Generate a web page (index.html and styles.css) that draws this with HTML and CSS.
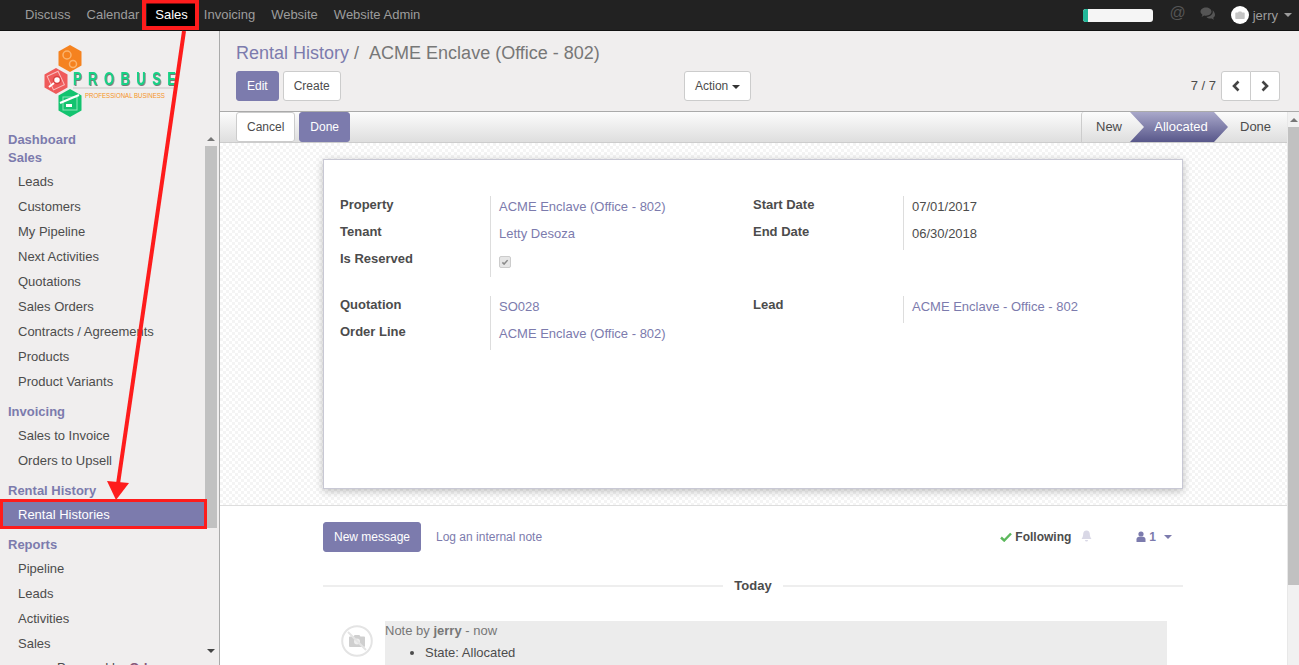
FILE: index.html

```html
<!DOCTYPE html>
<html lang="en">
<head>
<meta charset="UTF-8" />
<meta name="viewport" content="width=device-width, initial-scale=1" />
<title>Rental History</title>
<link rel="stylesheet" href="styles.css">
</head>
<body>

<nav class="topbar">
  <ul class="apps">
    <li>Discuss</li>
    <li>Calendar</li>
    <li class="current">Sales</li>
    <li>Invoicing</li>
    <li>Website</li>
    <li>Website Admin</li>
  </ul>
  <div class="systray">
    <div class="progress"><span></span></div>
    <span class="at">@</span>
    <svg class="comments" width="16" height="14" viewBox="0 0 16 14"><path d="M6 0.5C2.9 0.5 0.5 2.3 0.5 4.6c0 1.3 0.8 2.4 2 3.2L1.6 10l2.6-1.4c0.6 0.1 1.2 0.2 1.8 0.2 3.1 0 5.5-1.9 5.500-4.200S9.100 0.500 6 0.5z" fill="#555"/><path d="M12.400 3.200c0.300 0.500 0.400 1 0.400 1.500 0 2.800-2.900 5.100-6.300 5.200 0.900 1 2.300 1.600 3.900 1.600 0.400 0 0.800 0 1.200-0.100l2.300 1.300-0.700-2c1.100-0.700 1.800-1.800 1.800-3 0-1.900-1.100-3.500-2.600-4.500z" fill="#555"/></svg>
    <span class="avatar">
      <svg width="10" height="8" viewBox="0 0 10 8"><path d="M1 1.500h2l0.700-1h2.600l0.700 1h2a0.700 0.700 0 0 1 0.700 0.700V7.300a0.700 0.700 0 0 1-0.700 0.700H1a0.700 0.700 0 0 1-0.700-0.700V2.200A0.700 0.700 0 0 1 1 1.500z" fill="#c4c4c4"/></svg>
    </span>
    <span class="user">jerry</span>
    <span class="caret"></span>
  </div>
</nav>

<div class="app">
  <aside class="sidebar">
    <div class="logo">
      <svg width="150" height="80" viewBox="0 0 150 80">
        <polygon points="30,1 41.500,7.500 41.500,21.500 30,28 18.500,21.500 18.500,7.500" fill="#f5821f"/>
        <circle cx="27" cy="11" r="4" fill="none" stroke="#fbb46e" stroke-width="1.500"/>
        <circle cx="33" cy="20" r="3.500" fill="none" stroke="#fbb46e" stroke-width="1.500"/>
        <polygon points="16,24 27.500,30.500 27.500,43.500 16,50 4.500,43.500 4.500,30.500" fill="#ef5b5b"/>
        <rect x="10" y="29" width="12" height="15" fill="none" stroke="#f9bcbc" transform="rotate(-25 16 37)"/>
        <circle cx="17" cy="36" r="3.500" fill="#fff" stroke="#d93f3f" stroke-width="1.500"/>
        <line x1="14" y1="39" x2="9" y2="43" stroke="#fff" stroke-width="2"/>
        <polygon points="30,45 41.500,51.500 41.500,66.500 30,73 18.500,66.500 18.500,51.500" fill="#13c36f"/>
        <rect x="23" y="53" width="14" height="13" fill="none" stroke="#8ce6ba"/>
        <line x1="20" y1="59" x2="39" y2="51" stroke="#fff" stroke-width="2"/>
        <rect x="26" y="60" width="6" height="3" fill="#fff"/>
        <line x1="33" y1="44" x2="137" y2="44" stroke="#c9c6c6" stroke-width="1"/>
        <text class="logo-name" transform="translate(33 41) scale(0.72 1)">PROBUSE</text>
        <text class="logo-tag" transform="translate(45 54) scale(0.85 1)">PROFESSIONAL BUSINESS</text>
      </svg>
    </div>
    <div class="menu-wrap">
      <div class="menu">
        <h4 class="first">Dashboard</h4>
        <h4>Sales</h4>
        <ul>
          <li>Leads</li>
          <li>Customers</li>
          <li>My Pipeline</li>
          <li>Next Activities</li>
          <li>Quotations</li>
          <li>Sales Orders</li>
          <li>Contracts / Agreements</li>
          <li>Products</li>
          <li>Product Variants</li>
        </ul>
        <h4 class="section">Invoicing</h4>
        <ul>
          <li>Sales to Invoice</li>
          <li>Orders to Upsell</li>
        </ul>
        <h4 class="section">Rental History</h4>
        <ul>
          <li class="active">Rental Histories</li>
        </ul>
        <h4 class="section">Reports</h4>
        <ul>
          <li>Pipeline</li>
          <li>Leads</li>
          <li>Activities</li>
          <li>Sales</li>
        </ul>
        <div class="powered">Powered by <b>Odoo</b></div>
      </div>
      <div class="scrollbar side-scroll">
        <span class="arrow-up"></span>
        <span class="thumb"></span>
        <span class="arrow-down"></span>
      </div>
    </div>
  </aside>

  <main class="content">
    <header class="control-panel">
      <h1 class="breadcrumb"><a>Rental History</a> <span class="slash">/</span> <span>ACME Enclave (Office - 802)</span></h1>
      <div class="cp-row">
        <div class="btn-set">
          <button class="btn primary">Edit</button>
          <button class="btn">Create</button>
        </div>
        <button class="btn action">Action <span class="caret dark"></span></button>
        <div class="pager">
          <span class="pager-count">7 / 7</span>
          <div class="pager-btns">
            <button class="btn"><svg width="10" height="12" viewBox="0 0 10 12"><path d="M7.500 1.500L3 6l4.500 4.500" fill="none" stroke="#444" stroke-width="2.600"/></svg></button>
            <button class="btn"><svg width="10" height="12" viewBox="0 0 10 12"><path d="M2.500 1.500L7 6l-4.500 4.500" fill="none" stroke="#444" stroke-width="2.600"/></svg></button>
          </div>
        </div>
      </div>
    </header>

    <div class="lower">
      <div class="view">
        <div class="statusbar">
          <div class="btn-set">
            <button class="btn">Cancel</button>
            <button class="btn primary">Done</button>
          </div>
          <div class="stages">
            <span class="stage new">New</span>
            <span class="stage current">Allocated</span>
            <span class="stage done">Done</span>
          </div>
        </div>

        <div class="sheet-bg">
          <section class="sheet">
            <div class="form-cols">
              <div>
                <div class="group">
                  <div class="row"><label>Property</label><a>ACME Enclave (Office - 802)</a></div>
                  <div class="row"><label>Tenant</label><a>Letty Desoza</a></div>
                  <div class="row"><label>Is Reserved</label>
                    <span class="check"><svg width="9" height="8" viewBox="0 0 9 8"><path d="M1 4.500l2.300 2.300L8 1.500" fill="none" stroke="#8a8a8a" stroke-width="2"/></svg></span>
                  </div>
                </div>
                <div class="group">
                  <div class="row"><label>Quotation</label><a>SO028</a></div>
                  <div class="row"><label>Order Line</label><a>ACME Enclave (Office - 802)</a></div>
                </div>
              </div>
              <div>
                <div class="group">
                  <div class="row"><label>Start Date</label><span>07/01/2017</span></div>
                  <div class="row"><label>End Date</label><span>06/30/2018</span></div>
                </div>
                <div class="group push">
                  <div class="row"><label>Lead</label><a>ACME Enclave - Office - 802</a></div>
                </div>
              </div>
            </div>
          </section>
        </div>

        <section class="chatter">
          <div class="chatter-top">
            <button class="btn primary">New message</button>
            <a class="log-note">Log an internal note</a>
            <div class="followers">
              <svg width="12" height="10" viewBox="0 0 12 10"><path d="M1 5.500l3.200 3L11 1.500" fill="none" stroke="#5cb85c" stroke-width="2.400"/></svg>
              <b>Following</b>
              <svg class="bell" width="11" height="12" viewBox="0 0 11 12"><path d="M5.500 0.500c-2.200 0-3.300 1.600-3.300 3.500 0 2.500-1 4-1.700 5h10c-0.700-1-1.700-2.500-1.700-5 0-1.900-1.100-3.500-3.300-3.500zM4 10h3a1.500 1.500 0 0 1-3 0z" fill="#d9d8e6"/></svg>
              <span class="count">
                <svg width="10" height="12" viewBox="0 0 10 12"><circle cx="5" cy="3" r="2.600" fill="#7c7bad"/><path d="M0.500 11v-2.500c0-1.600 1.200-2.700 2.500-2.700h4c1.300 0 2.500 1.100 2.500 2.700V11z" fill="#7c7bad"/></svg>
                <b>1</b>
                <span class="caret purple"></span>
              </span>
            </div>
          </div>
          <div class="divider"><span>Today</span></div>
          <div class="message">
            <span class="msg-avatar">
              <svg width="32" height="32" viewBox="0 0 32 32"><circle cx="16" cy="16" r="14.800" fill="none" stroke="#e4e4e4" stroke-width="2"/><path d="M9 11.500h3.500l1.200-1.500h4.600l1.200 1.500H23a1 1 0 0 1 1 1v8.500a1 1 0 0 1-1 1H9a1 1 0 0 1-1-1v-8.500a1 1 0 0 1 1-1z" fill="#cfcfcf"/><circle cx="16" cy="16.500" r="3" fill="#eee"/><line x1="7" y1="7" x2="25" y2="25" stroke="#e4e4e4" stroke-width="2"/></svg>
            </span>
            <div class="note">
              <div class="note-head">Note by <b>jerry</b> - now</div>
              <ul><li>State: Allocated</li></ul>
            </div>
          </div>
        </section>
      </div>
      <div class="scrollbar main-scroll">
        <span class="arrow-up"></span>
        <span class="thumb"></span>
      </div>
    </div>
  </main>
</div>

<!-- red annotation drawn over the screenshot -->
<svg class="annotation" width="1299" height="665" viewBox="0 0 1299 665">
  <rect x="144" y="1.500" width="53" height="26.500" fill="none" stroke="#fe1c1c" stroke-width="4"/>
  <rect x="1.500" y="500.500" width="204" height="27" fill="none" stroke="#fe1c1c" stroke-width="3"/>
  <line x1="184" y1="31" x2="118" y2="484" stroke="#fe1c1c" stroke-width="4"/>
  <polygon points="107,481 129,483 116,500" fill="#fe1c1c"/>
</svg>

</body>
</html>
```

FILE: styles.css

```css
* {
  box-sizing: border-box;
}
html, body {
  height: 100%;
}
body {
  margin: 0;
  overflow: hidden;
  position: relative;
  font-family: "Liberation Sans", Arial, sans-serif;
  font-size: 13px;
  color: #4c4c4c;
  background: #fff;
}
ul {
  list-style: none;
  margin: 0;
  padding: 0;
}
a {
  color: #7c7bad;
}

/* top bar */
.topbar {
  height: 31px;
  background: #222;
  border-bottom: 1px solid #111;
  display: flex;
  justify-content: space-between;
  color: #9d9d9d;
}
.apps {
  display: flex;
  padding-left: 17px;
}
.apps li {
  padding: 0 8px;
  line-height: 30px;
}
.apps .current {
  background: #000;
  color: #fff;
}
.systray {
  display: flex;
  align-items: center;
  padding-right: 7px;
}
.progress {
  width: 70px;
  height: 13px;
  background: #f5f5f5;
  border-radius: 3px;
  overflow: hidden;
  margin-right: 16px;
}
.progress span {
  display: block;
  width: 5px;
  height: 100%;
  background: #21b799;
}
.at {
  font-size: 16px;
  color: #555;
  margin: -4px 14px 0 0;
}
.comments {
  margin: -3px 15px 0 0;
}
.avatar {
  width: 18px;
  height: 18px;
  border-radius: 50%;
  background: #fff;
  display: flex;
  align-items: center;
  justify-content: center;
  margin-right: 4px;
}
.user {
  margin-right: 6px;
}
.caret {
  display: inline-block;
  width: 0;
  height: 0;
  border-top: 4px solid #9d9d9d;
  border-left: 4px solid transparent;
  border-right: 4px solid transparent;
  vertical-align: middle;
}
.caret.dark {
  border-top-color: #333;
}
.caret.purple {
  border-top-color: #7c7bad;
}

/* shell */
.app {
  height: 634px;
  display: flex;
}
.sidebar {
  width: 220px;
  flex: none;
  background: #f0eeee;
  border-right: 1px solid #aaa;
  display: flex;
  flex-direction: column;
  overflow: hidden;
}
.logo {
  height: 100px;
  padding: 13px 0 0 40px;
  flex: none;
}
.logo-name {
  font-size: 18px;
  font-weight: bold;
  letter-spacing: 9px;
  fill: #17d285;
  filter: drop-shadow(1px 1px 0 #777);
}
.logo-tag {
  font-size: 7.200px;
  fill: #f5941e;
}
.menu-wrap {
  flex: 1;
  display: flex;
  min-height: 0;
}
.menu {
  width: 205px;
  flex: none;
  overflow: hidden;
}
.menu h4 {
  margin: 0;
  padding-left: 8px;
  font-size: 13px;
  font-weight: bold;
  color: #7c7bad;
  line-height: 18px;
}
.menu .section {
  margin-top: 6px;
  line-height: 24px;
  height: 21px;
}
.menu ul li {
  height: 25px;
  line-height: 25px;
  padding-left: 18px;
}
.menu h4 + ul {
  margin-top: 2px;
}
.menu .section + ul {
  margin-top: 2px;
}
.menu .active {
  background: #7c7bad;
  color: #fff;
}
.powered {
  padding-left: 57px;
  margin-top: 4px;
}
.powered b {
  color: #875a7b;
}
.scrollbar {
  width: 12px;
  flex: none;
  display: flex;
  flex-direction: column;
  align-items: center;
}
.thumb {
  width: 100%;
  display: block;
  background: #c1c1c1;
}
.arrow-up, .arrow-down {
  width: 0;
  height: 0;
  border-left: 4px solid transparent;
  border-right: 4px solid transparent;
  flex: none;
}
.arrow-up {
  border-bottom: 4px solid #777;
}
.arrow-down {
  border-top: 4px solid #444;
}
.side-scroll {
  padding-top: 6px;
  background: #f0eeee;
}
.side-scroll .thumb {
  height: 382px;
  margin-top: 5px;
}
.side-scroll .arrow-down {
  margin-top: 121px;
}

/* control panel */
.content {
  flex: 1;
  min-width: 0;
  display: flex;
  flex-direction: column;
}
.control-panel {
  height: 81px;
  flex: none;
  background: #f0eeee;
  border-bottom: 1px solid #aaa;
  padding: 11px 16px 0;
}
.breadcrumb {
  margin: 0;
  font-size: 18px;
  font-weight: normal;
  line-height: 23px;
  color: #777;
  white-space: nowrap;
}
.breadcrumb a {
  color: #7c7bad;
}
.breadcrumb .slash {
  margin-right: 6px;
}
.cp-row {
  display: flex;
  margin-top: 6px;
}
.btn {
  font: inherit;
  font-size: 12px;
  height: 30px;
  padding: 0 10px;
  background: #fff;
  border: 1px solid #ccc;
  border-radius: 3px;
  color: #4c4c4c;
  white-space: nowrap;
}
.btn.primary {
  background: #7c7bad;
  border-color: #7c7bad;
  color: #fff;
}
.btn-set {
  display: flex;
  gap: 4px;
}
.action {
  margin-left: 343px;
  width: 67px;
  padding: 0;
}
.pager {
  margin-left: auto;
  display: flex;
  align-items: center;
  gap: 5px;
  margin-right: 3px;
}
.pager-count {
  padding-bottom: 2px;
  color: #4c4c4c;
}
.pager-btns {
  display: flex;
}
.pager-btns .btn {
  width: 30px;
  padding: 0;
  display: flex;
  align-items: center;
  justify-content: center;
}
.pager-btns .btn:first-child {
  border-radius: 3px 0 0 3px;
}
.pager-btns .btn:last-child {
  border-radius: 0 3px 3px 0;
  border-left: 0;
  width: 29px;
}

/* status bar */
.lower {
  flex: 1;
  min-height: 0;
  display: flex;
}
.view {
  flex: 1;
  min-width: 0;
}
.statusbar {
  height: 31px;
  display: flex;
  justify-content: space-between;
  padding-left: 16px;
  background: linear-gradient(#fcfcfc, #dedede);
  border-bottom: 1px solid #ccc;
}
.statusbar .btn {
  height: 30px;
}
.stages {
  display: flex;
  height: 30px;
}
.stage {
  line-height: 30px;
  padding: 0 14px;
  color: #4c4c4c;
}
.stage.new {
  width: 55px;
  border-left: 1px solid #ccc;
  border-radius: 3px 0 0 0;
}
.stage.current {
  width: 98px;
  color: #fff;
  text-align: center;
  padding: 0 0 0 4px;
  background: linear-gradient(#a9a8ca, #58578a);
  clip-path: polygon(0 100%, 14px 50%, 0 0, 84px 0, 98px 50%, 84px 100%);
  margin-left: -6px;
}
.stage.done {
  width: 59px;
  padding: 0 0 0 12px;
}

/* form */
.sheet-bg {
  height: 363px;
  padding: 16px 0 0 103px;
  border-bottom: 1px solid #ddd;
  background-color: #fff;
  background-image: conic-gradient(#f4f4f4 25%, #fff 0 50%, #f4f4f4 0 75%, #fff 0);
  background-size: 6px 6px;
}
.sheet {
  width: 860px;
  height: 330px;
  background: #fff;
  border: 1px solid #c8c8d4;
  box-shadow: 0 2px 8px rgba(0, 0, 0, 0.25);
  padding: 36px 16px 0;
}
.form-cols {
  display: flex;
}
.form-cols > div {
  width: 413px;
}
.group {
  margin-bottom: 19px;
}
.group.push {
  margin-top: 46px;
}
.row {
  display: flex;
  height: 27px;
}
.row label {
  width: 150px;
  flex: none;
  font-weight: bold;
  line-height: 17px;
}
.row > a, .row > span {
  flex: 1;
  border-left: 1px solid #ddd;
  padding: 2px 0 0 8px;
  line-height: 17px;
}
.row .check {
  padding: 0;
}
.check svg {
  display: block;
  width: 12px;
  height: 12px;
  margin: 6px 0 0 8px;
  padding: 2px 1px;
  background: #e6e6e6;
  border: 1px solid #ccc;
  border-radius: 2px;
}

/* chatter */
.chatter {
  padding: 16px 104px 0 103px;
  height: 200px;
}
.chatter-top {
  display: flex;
  align-items: center;
  height: 30px;
}
.chatter-top .btn {
  padding: 0;
  width: 98px;
}
.log-note {
  font-size: 12px;
  margin-left: 15px;
}
.followers {
  margin-left: auto;
  display: flex;
  align-items: center;
  padding-right: 11px;
}
.followers b {
  color: #4c4c4c;
  font-size: 12px;
  margin-left: 3px;
}
.bell {
  margin: -3px 0 0 10px;
}
.count {
  display: flex;
  align-items: center;
  margin-left: 44px;
}
.count b {
  color: #7c7bad;
  margin-left: 3px;
}
.count .caret {
  margin-left: 8px;
}
.divider {
  height: 2px;
  background: #eee;
  margin-top: 33px;
  display: flex;
  justify-content: center;
}
.divider span {
  background: #fff;
  padding: 0 11px;
  height: 18px;
  margin-top: -7px;
  font-weight: bold;
  font-size: 13px;
  flex: none;
}
.message {
  display: flex;
  margin: 34px 16px 0 18px;
}
.msg-avatar {
  width: 44px;
  padding-top: 4px;
  flex: none;
}
.note {
  flex: 1;
  background: #ececec;
  height: 60px;
  padding-top: 2px;
}
.note-head {
  font-size: 13px;
  line-height: 16px;
  color: #777;
}
.note ul {
  list-style: disc;
  padding-left: 40px;
  margin-top: 6px;
}

/* page scrollbar */
.main-scroll {
  background: #f1f1f1;
  border-left: 1px solid #e8e8e8;
  padding-top: 6px;
}
.main-scroll .thumb {
  height: 458px;
  margin-top: 5px;
}

.annotation {
  position: absolute;
  left: 0;
  top: 0;
  pointer-events: none;
}
```
